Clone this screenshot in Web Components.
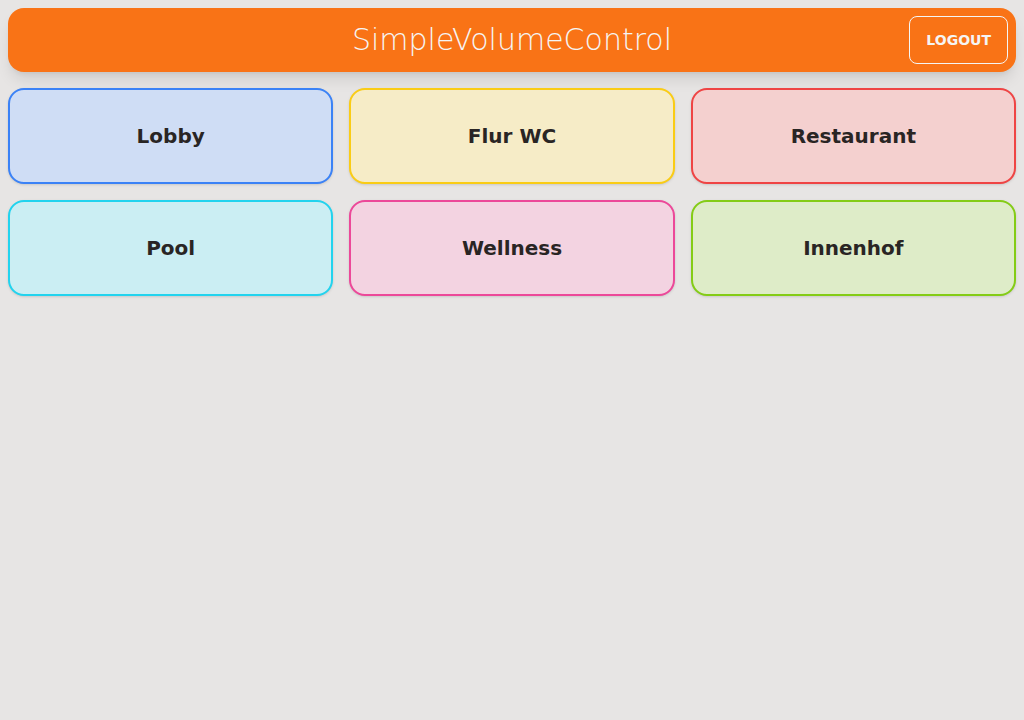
<!DOCTYPE html>
<html lang="en">
<head>
<meta charset="utf-8">
<meta name="viewport" content="width=device-width, initial-scale=1">
<title>SimpleVolumeControl</title>
<style>
  body {
    margin: 0;
    background: #e7e5e4;
    color: #292524;
    font-family: "DejaVu Sans", sans-serif;
  }
</style>
</head>
<body>
<volume-app>
  <app-header slot="header">SimpleVolumeControl</app-header>
  <room-button tone="blue">Lobby</room-button>
  <room-button tone="yellow">Flur WC</room-button>
  <room-button tone="red">Restaurant</room-button>
  <room-button tone="cyan">Pool</room-button>
  <room-button tone="pink">Wellness</room-button>
  <room-button tone="lime">Innenhof</room-button>
</volume-app>

<template id="volume-app">
  <style>
    :host { display: flex; flex-direction: column; gap: 16px; padding: 8px; }
    main { display: grid; grid-template-columns: repeat(3, minmax(0, 1fr)); gap: 16px; }
  </style>
  <slot name="header"></slot>
  <main><slot></slot></main>
</template>

<template id="app-header">
  <style>
    :host { display: block; }
    header {
      display: grid;
      grid-template-columns: 1fr auto 1fr;
      align-items: center;
      padding: 8px;
      border-radius: 16px;
      background: #f97316;
      color: #f5f5f4;
      box-shadow: 0 10px 15px -3px rgb(0 0 0 / 0.1), 0 4px 6px -4px rgb(0 0 0 / 0.1);
    }
    h1 { grid-column: 2; margin: 0; font-size: 30px; line-height: 36px; font-weight: 200; }
    button {
      justify-self: end;
      height: 48px;
      padding: 0 16px;
      border: 1px solid currentColor;
      border-radius: 8px;
      background: transparent;
      color: inherit;
      font: 700 14px/14px "DejaVu Sans", sans-serif;
      text-transform: uppercase;
      cursor: pointer;
    }
  </style>
  <header>
    <h1><slot></slot></h1>
    <button type="button">Logout</button>
  </header>
</template>

<template id="room-button">
  <style>
    :host { display: block; --line: #3b82f6; --fill: #cfddf5; }
    :host([tone="yellow"]) { --line: #facc15; --fill: #f6ecc7; }
    :host([tone="red"]) { --line: #ef4444; --fill: #f4d0cf; }
    :host([tone="cyan"]) { --line: #22d3ee; --fill: #cbeef3; }
    :host([tone="pink"]) { --line: #ec4899; --fill: #f3d3e1; }
    :host([tone="lime"]) { --line: #84cc16; --fill: #deecc8; }
    button {
      display: block;
      width: 100%;
      height: 96px;
      padding: 0 16px;
      border: 2px solid var(--line);
      border-radius: 16px;
      background: var(--fill);
      color: inherit;
      font: 700 20px/28px "DejaVu Sans", sans-serif;
      box-shadow: 0 1px 3px rgb(0 0 0 / 0.1), 0 1px 2px -1px rgb(0 0 0 / 0.1);
      cursor: pointer;
    }
  </style>
  <button type="button"><slot></slot></button>
</template>

<script>
  class TemplateElement extends HTMLElement {
    constructor() {
      super();
      const template = document.getElementById(this.localName);
      this.attachShadow({ mode: "open" }).append(template.content.cloneNode(true));
    }
  }
  customElements.define("volume-app", class extends TemplateElement {});
  customElements.define("app-header", class extends TemplateElement {});
  customElements.define("room-button", class extends TemplateElement {});
</script>
</body>
</html>
